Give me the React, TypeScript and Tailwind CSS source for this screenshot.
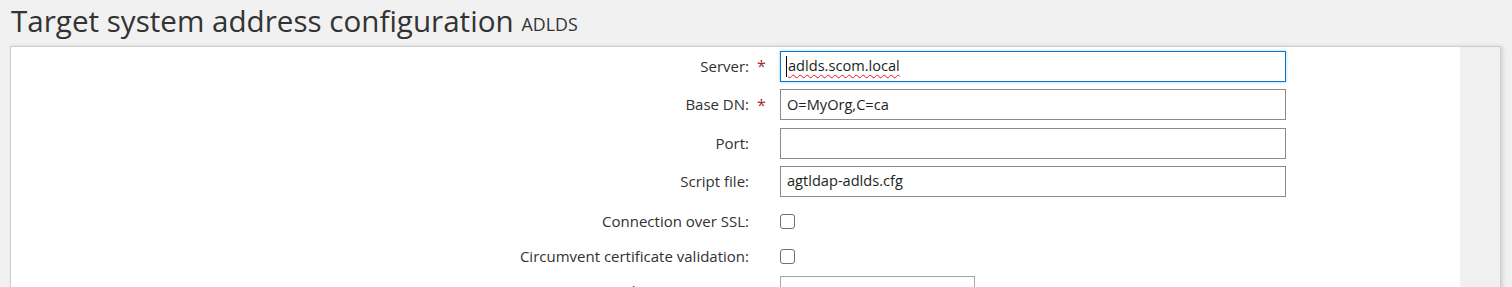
import { ChevronDown } from "lucide-react";

const font = { fontFamily: '"Open Sans", "Noto Sans", sans-serif' };

function Label({ text, required }: { text: string; required?: boolean }) {
  return (
    <>
      <div className="w-[738px] shrink-0 text-right text-[15px] text-[#323130]">{text}</div>
      <div className="w-[31px] shrink-0 pl-[8px] text-[16px] leading-none text-[#a4262c]">{required ? "*" : ""}</div>
    </>
  );
}

function TextBox({ value }: { value?: string }) {
  return (
    <div className="w-[506px] h-[31px] border border-[#8a8a8a] bg-white flex items-center px-[6px] text-[14.6px] text-[#201f1e]">
      {value}
    </div>
  );
}

function CheckBox() {
  return <div className="w-[15px] h-[15px] border border-[#6e6e6e] rounded-[3px] bg-white" />;
}

export default function App() {
  return (
    <div className="w-[1512px] h-[287px] overflow-hidden bg-[#f1f1f1]" style={font}>
      <div className="h-[46px] pl-[11px] flex items-start">
        <span className="text-[29.6px] leading-[42px] text-[#333]">Target system address configuration</span>
        <span className="ml-[8px] mt-[11px] text-[17.8px] leading-[26px] text-[#333]">ADLDS</span>
      </div>

      <div className="ml-[10px] w-[1491px] h-[300px] flex border-t border-l border-r border-[#cdcdcd] shadow-[2px_0_4px_rgba(0,0,0,0.12)]">
        <div className="flex-1 bg-white flex flex-col">
          <div className="h-[38px] flex items-center">
            <Label text="Server:" required />
            <div className="w-[506px] h-[31px] border border-[#0078d4] shadow-[0_0_3px_rgba(0,120,212,0.35)] bg-white flex items-center pl-[5px] text-[14.6px] text-[#201f1e]">
              <span className="w-[1px] h-[21px] bg-black mr-[1px]" />
              <span className="underline decoration-wavy decoration-[#e81123] decoration-1 underline-offset-[3px]">adlds.scom.local</span>
            </div>
          </div>
          <div className="h-[39px] flex items-center">
            <Label text="Base DN:" required />
            <TextBox value="O=MyOrg,C=ca" />
          </div>
          <div className="h-[38px] flex items-center">
            <Label text="Port:" />
            <TextBox />
          </div>
          <div className="h-[38px] flex items-center">
            <Label text="Script file:" />
            <TextBox value="agtldap-adlds.cfg" />
          </div>
          <div className="h-[42px] flex items-center">
            <Label text="Connection over SSL:" />
            <CheckBox />
          </div>
          <div className="h-[28px] flex items-center">
            <Label text="Circumvent certificate validation:" />
            <CheckBox />
          </div>
          <div className="pt-[6px] flex items-center">
            <Label text="Authentication type:" />
            <div className="w-[195px] h-[31px] border border-[#a6a6a6] bg-white flex items-center justify-end pr-[20px]">
              <ChevronDown size={14} strokeWidth={1.5} className="text-[#444]" />
            </div>
          </div>
        </div>
        <div className="w-[40px] bg-[#f0f0f0]" />
      </div>
    </div>
  );
}
